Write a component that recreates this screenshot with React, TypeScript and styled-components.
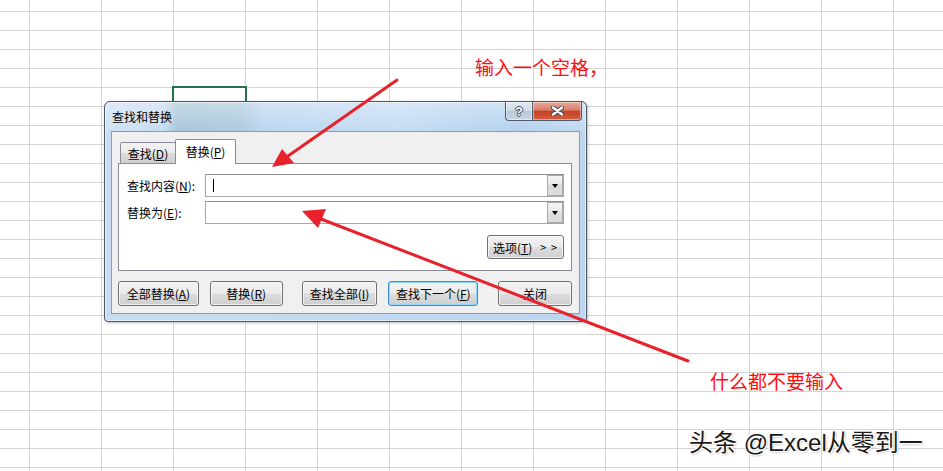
import React from "react";
import styled, { createGlobalStyle } from "styled-components";

const GlobalStyle = createGlobalStyle`
  html, body {
    margin: 0;
    padding: 0;
    background: #fff;
    overflow: hidden;
  }
  * {
    box-sizing: border-box;
  }
`;

const Sheet = styled.div`
  position: relative;
  width: 943px;
  height: 471px;
  overflow: hidden;
  background-color: #fff;
  background-image: linear-gradient(to right, #d4d4d4 1px, transparent 1px),
    linear-gradient(to bottom, #d4d4d4 1px, transparent 1px);
  background-size: 72px 19px;
  background-position: 29px 0, 0 11px;
`;

const SelectedCell = styled.div`
  position: absolute;
  left: 172px;
  top: 86px;
  width: 75px;
  height: 26px;
  border: 2px solid #217346;
  z-index: 1;
`;

const Window = styled.div`
  position: absolute;
  left: 104px;
  top: 101px;
  width: 483px;
  height: 221px;
  display: flex;
  flex-direction: column;
  padding: 0 6px 7px;
  border: 1px solid #4b5663;
  border-radius: 6px 6px 4px 4px;
  background-color: #c2d9f0;
  background-image: linear-gradient(
      180deg,
      rgba(255, 255, 255, 0.35),
      rgba(255, 255, 255, 0) 14%
    ),
    linear-gradient(
      90deg,
      #cfe1f4 0%,
      #c7dcf2 12%,
      #a8c6d9 15%,
      #acc9dc 28%,
      #bbd6f0 33%,
      #c4dcf4 60%,
      #b4d1ee 86%,
      #c0d9f2 100%
    ),
    linear-gradient(90deg, #c8ddf2, #bcd6ef);
  background-size: 100% 100%, 100% 30px, 100% 100%;
  background-repeat: no-repeat;
  box-shadow: inset 0 0 0 1px rgba(255, 255, 255, 0.55),
    1px 1px 3px rgba(0, 0, 0, 0.25);
  font-family: "Noto Sans CJK SC", "Microsoft YaHei", sans-serif;
  font-size: 12px;
  color: #000;
  z-index: 2;
`;

const TitleBar = styled.div`
  height: 29px;
  display: flex;
  align-items: flex-start;
  justify-content: space-between;
`;

const Title = styled.div`
  line-height: 29px;
  padding-left: 1px;
  color: #000;
`;

const CaptionButtons = styled.div`
  display: flex;
  margin-right: -2px;
`;

const CaptionButton = styled.div<{ $kind: "help" | "close" }>`
  width: ${(p) => (p.$kind === "help" ? 28 : 49)}px;
  height: 19px;
  display: flex;
  align-items: center;
  justify-content: center;
  border: 1px solid #4f5b68;
  border-top: none;
  border-left-width: ${(p) => (p.$kind === "help" ? 1 : 0)}px;
  border-radius: ${(p) => (p.$kind === "help" ? "0 0 0 4px" : "0 0 4px 0")};
  background: ${(p) =>
    p.$kind === "help"
      ? "linear-gradient(#e4ecf5, #cfdbe7 48%, #b7c8da 52%, #c8d7e6)"
      : "linear-gradient(#eaab9b, #d87d66 45%, #c3412a 52%, #d4603f)"};
  box-shadow: inset 0 0 0 1px rgba(255, 255, 255, 0.45);
  color: #fff;
  font-family: "Liberation Sans", sans-serif;
  font-weight: bold;
  font-size: 13px;
  text-shadow: 1px 0 0 #3d4855, -1px 0 0 #3d4855, 0 1px 0 #3d4855,
    0 -1px 0 #3d4855;
`;

const Client = styled.div`
  flex: 1;
  display: flex;
  flex-direction: column;
  padding: 7px 7px 7px 6px;
  border: 1px solid #8e9bab;
  background: #f0f0f0;
`;

const TabStrip = styled.div`
  display: flex;
  align-items: flex-end;
  height: 24px;
  padding-left: 2px;
  position: relative;
  z-index: 1;
`;

const Tab = styled.div<{ $active?: boolean }>`
  width: ${(p) => (p.$active ? 61 : 56)}px;
  height: ${(p) => (p.$active ? 25 : 21)}px;
  margin-bottom: ${(p) => (p.$active ? -1 : 0)}px;
  margin-left: ${(p) => (p.$active ? -1 : 0)}px;
  display: flex;
  align-items: center;
  justify-content: center;
  padding-bottom: ${(p) => (p.$active ? 1 : 0)}px;
  border: 1px solid #898c95;
  border-bottom: none;
  border-radius: 2px 2px 0 0;
  background: ${(p) =>
    p.$active
      ? "#fff"
      : "linear-gradient(#f3f3f3, #ebebeb 50%, #dddddd 50%, #cfcfcf)"};
`;

const TabPanel = styled.div`
  height: 108px;
  display: flex;
  flex-direction: column;
  padding: 10px 7px 11px 8px;
  border: 1px solid #898c95;
  background: #fff;
`;

const FieldRow = styled.div`
  display: flex;
  align-items: center;
  height: 23px;
  & + & {
    margin-top: 4px;
  }
`;

const FieldLabel = styled.div`
  width: 78px;
  white-space: nowrap;
`;

const Combo = styled.div`
  width: 359px;
  height: 23px;
  display: flex;
  align-items: center;
  border: 1px solid #a6a6a6;
  border-top-color: #8f8f8f;
  background: #fff;
`;

const ComboText = styled.div`
  flex: 1;
  height: 100%;
  display: flex;
  align-items: center;
  padding-left: 7px;
`;

const Caret = styled.span`
  width: 1px;
  height: 13px;
  background: #000;
`;

const DropButton = styled.div`
  width: 16px;
  height: 100%;
  display: flex;
  align-items: center;
  justify-content: center;
  border: 1px solid #a9a9a9;
  background: linear-gradient(#f6f6f6, #e6e6e6 50%, #d9d9d9 50%, #dedede);

  &::after {
    content: "";
    border-left: 3.5px solid transparent;
    border-right: 3.5px solid transparent;
    border-top: 4px solid #000;
  }
`;

const OptionsRow = styled.div`
  display: flex;
  justify-content: flex-end;
  height: 24px;
  margin-top: 11px;
`;

const ButtonRow = styled.div`
  display: flex;
  height: 25px;
  margin-top: 10px;
`;

const PushButton = styled.button<{
  $width: number;
  $gap?: number;
  $default?: boolean;
}>`
  width: ${(p) => p.$width}px;
  height: 100%;
  margin-left: ${(p) => p.$gap ?? 0}px;
  padding: 0;
  display: flex;
  align-items: center;
  justify-content: center;
  border: 1px solid ${(p) => (p.$default ? "#3c8fcf" : "#707070")};
  border-radius: 3px;
  background: linear-gradient(#f2f2f2, #ebebeb 50%, #dddddd 50%, #cfcfcf);
  box-shadow: ${(p) =>
    p.$default
      ? "inset 0 0 0 1px #8fd6f6"
      : "inset 0 0 0 1px rgba(255, 255, 255, 0.7)"};
  font-family: "Noto Sans CJK SC", "Microsoft YaHei", sans-serif;
  font-size: 12px;
  color: #000;
  white-space: nowrap;
`;

const Chevrons = styled.span`
  margin-left: 8px;
  font-size: 11px;
  letter-spacing: 1px;
`;

const Annotation = styled.div<{ $x: number; $y: number }>`
  position: absolute;
  left: ${(p) => p.$x}px;
  top: ${(p) => p.$y}px;
  color: #ff0d0d;
  font-family: "Noto Sans CJK SC", sans-serif;
  font-size: 19px;
  line-height: 19px;
  white-space: nowrap;
  z-index: 4;
`;

const Watermark = styled.div`
  position: absolute;
  left: 689px;
  top: 431px;
  color: #1a1a1a;
  font-family: "Liberation Sans", "Noto Sans CJK SC", sans-serif;
  font-size: 24px;
  line-height: 24px;
  white-space: nowrap;
  text-shadow: 1px 1px 0 #fff, -1px -1px 0 #fff, 1px -1px 0 #fff,
    -1px 1px 0 #fff, 1px 1px 2px rgba(0, 0, 0, 0.5);
  z-index: 4;
`;

const Overlay = styled.svg`
  position: absolute;
  left: 0;
  top: 0;
  pointer-events: none;
  z-index: 3;
`;

const CloseGlyph = () => (
  <svg width="13" height="10" viewBox="0 0 13 10">
    <path d="M2 1.5 L11 8.5 M11 1.5 L2 8.5" stroke="#3d4855" strokeWidth="4.4" strokeLinecap="round" />
    <path d="M2 1.5 L11 8.5 M11 1.5 L2 8.5" stroke="#fff" strokeWidth="2.4" strokeLinecap="round" />
  </svg>
);

const Arrows = () => (
  <Overlay width="943" height="471" viewBox="0 0 943 471">
    <g stroke="#e8222a" strokeWidth="3" strokeLinecap="round" fill="#e8222a">
      <line x1="397" y1="80" x2="288" y2="156" />
      <polygon points="272,167 282,149 294,163" stroke="none" />
      <line x1="688" y1="361" x2="321" y2="219" />
      <polygon points="302,211 326,209 318,228" stroke="none" />
    </g>
  </Overlay>
);

const App = (): React.ReactElement => (
  <Sheet>
    <GlobalStyle />
    <SelectedCell />
    <Window>
      <TitleBar>
        <Title>查找和替换</Title>
        <CaptionButtons>
          <CaptionButton $kind="help">?</CaptionButton>
          <CaptionButton $kind="close">
            <CloseGlyph />
          </CaptionButton>
        </CaptionButtons>
      </TitleBar>
      <Client>
        <TabStrip>
          <Tab>
            查找(<u>D</u>)
          </Tab>
          <Tab $active>
            替换(<u>P</u>)
          </Tab>
        </TabStrip>
        <TabPanel>
          <FieldRow>
            <FieldLabel>
              查找内容(<u>N</u>):
            </FieldLabel>
            <Combo>
              <ComboText>
                <Caret />
              </ComboText>
              <DropButton />
            </Combo>
          </FieldRow>
          <FieldRow>
            <FieldLabel>
              替换为(<u>E</u>):
            </FieldLabel>
            <Combo>
              <ComboText />
              <DropButton />
            </Combo>
          </FieldRow>
          <OptionsRow>
            <PushButton $width={77}>
              选项(<u>T</u>)<Chevrons>&gt; &gt;</Chevrons>
            </PushButton>
          </OptionsRow>
        </TabPanel>
        <ButtonRow>
          <PushButton $width={81}>
            全部替换(<u>A</u>)
          </PushButton>
          <PushButton $width={73} $gap={11}>
            替换(<u>R</u>)
          </PushButton>
          <PushButton $width={76} $gap={19}>
            查找全部(<u>I</u>)
          </PushButton>
          <PushButton $width={90} $gap={11} $default>
            查找下一个(<u>F</u>)
          </PushButton>
          <PushButton $width={74} $gap={20}>
            关闭
          </PushButton>
        </ButtonRow>
      </Client>
    </Window>
    <Arrows />
    <Annotation $x={475} $y={57}>
      输入一个空格，
    </Annotation>
    <Annotation $x={710} $y={371}>
      什么都不要输入
    </Annotation>
    <Watermark>头条 @Excel从零到一</Watermark>
  </Sheet>
);

export default App;
